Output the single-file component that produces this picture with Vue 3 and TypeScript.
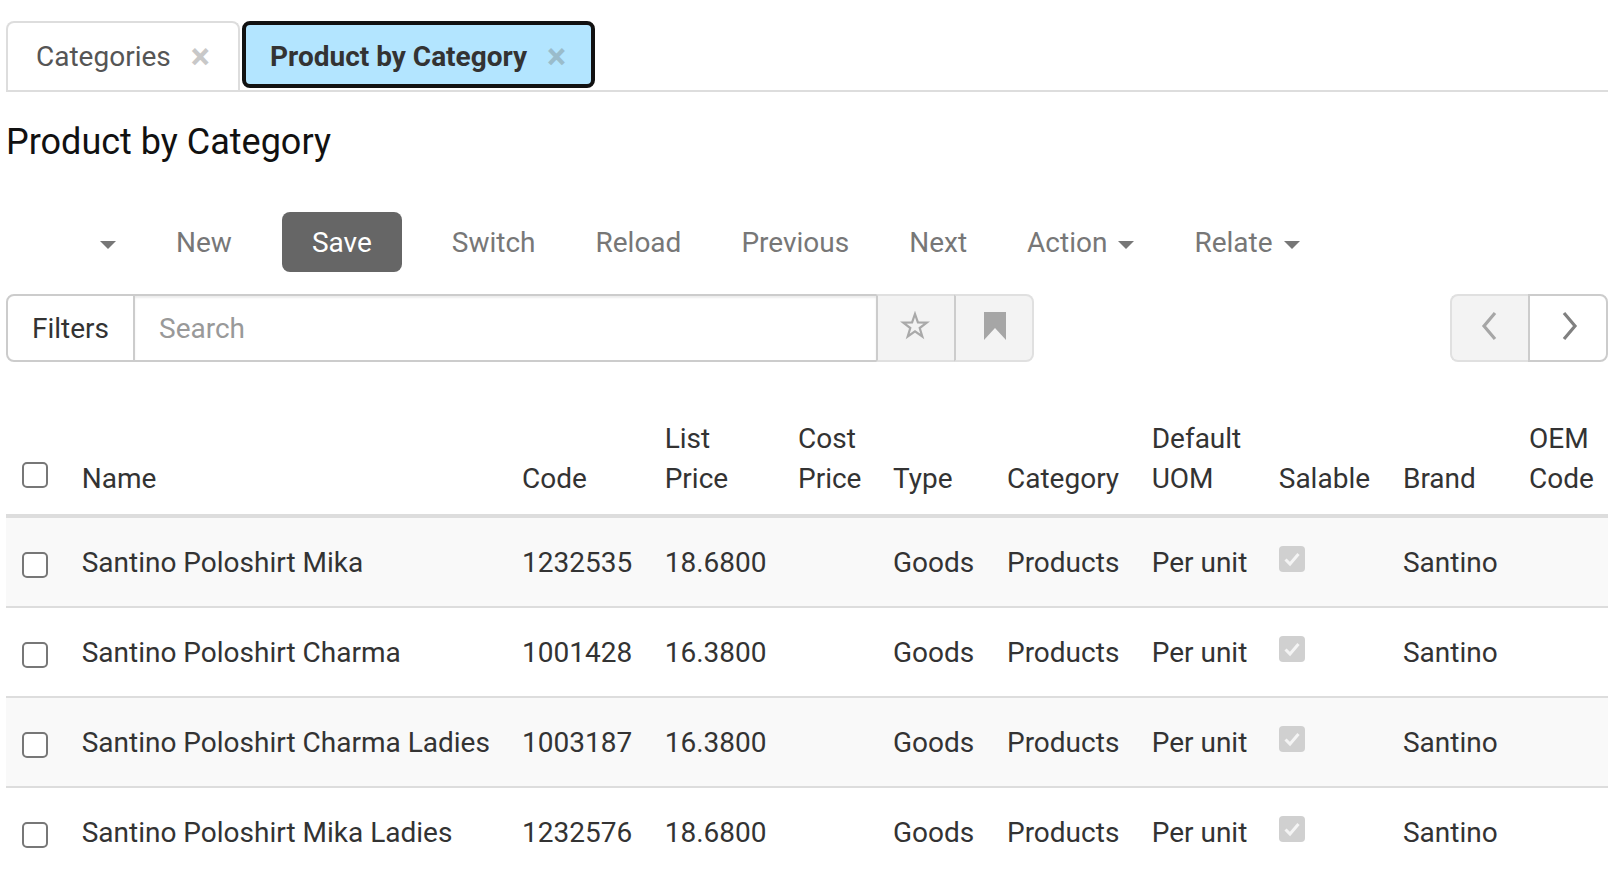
<script setup lang="ts">
interface Row { name: string; code: string; price: string }
const rows: Row[] = [
  { name: 'Santino Poloshirt Mika', code: '1232535', price: '18.6800' },
  { name: 'Santino Poloshirt Charma', code: '1001428', price: '16.3800' },
  { name: 'Santino Poloshirt Charma Ladies', code: '1003187', price: '16.3800' },
  { name: 'Santino Poloshirt Mika Ladies', code: '1232576', price: '18.6800' },
]
const colWidths = [59.7, 440.3, 142.7, 133.3, 95, 114, 144.7, 127.1, 124.2, 126, 94.6]
</script>

<template>
  <div class="page">
    <div class="tabs">
      <div class="tab">Categories <span class="close">×</span></div>
      <div class="tab active">Product by Category <span class="close">×</span></div>
    </div>
    <h1 class="title">Product by Category</h1>
    <div class="toolbar">
      <span class="tbtn caret-only"><i class="caret"></i></span>
      <span class="tbtn">New</span>
      <span class="tbtn save">Save</span>
      <span class="tbtn">Switch</span>
      <span class="tbtn">Reload</span>
      <span class="tbtn">Previous</span>
      <span class="tbtn">Next</span>
      <span class="tbtn">Action<i class="caret"></i></span>
      <span class="tbtn">Relate<i class="caret"></i></span>
    </div>
    <div class="filterbar">
      <div class="group search">
        <div class="filters">Filters</div>
        <div class="input">Search</div>
        <div class="addon">
          <svg class="lift star" width="30" height="30" viewBox="0 0 30 30"><path d="M15 3l2.900 8.400 8.900.2-7.100 5.400 2.600 8.500-7.300-5.100-7.300 5.100 2.600-8.500-7.100-5.400 8.900-.2z" fill="none" stroke="#a9a9a9" stroke-width="2.200"/></svg>
        </div>
        <div class="addon last">
          <svg class="lift" width="24" height="30" viewBox="0 0 24 30"><path d="M1 1h22v28l-11-12-11 12z" fill="#a6a6a6"/></svg>
        </div>
      </div>
      <div class="group nav">
        <div class="addon navbtn">
          <svg class="lift" width="20" height="30" viewBox="0 0 20 30"><path d="M15 2L4 15l11 13" fill="none" stroke="#a6a6a6" stroke-width="3.200"/></svg>
        </div>
        <div class="navbtn next">
          <svg class="lift" width="20" height="30" viewBox="0 0 20 30"><path d="M6 2l11 13L6 28" fill="none" stroke="#808080" stroke-width="3.200"/></svg>
        </div>
      </div>
    </div>
    <table class="grid">
      <colgroup>
        <col v-for="(w, i) in colWidths" :key="i" :style="{ width: w + 'px' }" />
      </colgroup>
      <thead>
        <tr>
          <th><span class="check head"></span></th>
          <th>Name</th>
          <th>Code</th>
          <th>List<br />Price</th>
          <th>Cost<br />Price</th>
          <th>Type</th>
          <th>Category</th>
          <th>Default<br />UOM</th>
          <th>Salable</th>
          <th>Brand</th>
          <th>OEM<br />Code</th>
        </tr>
      </thead>
      <tbody>
        <tr v-for="r in rows" :key="r.code">
          <td><span class="check"></span></td>
          <td>{{ r.name }}</td>
          <td>{{ r.code }}</td>
          <td>{{ r.price }}</td>
          <td></td>
          <td>Goods</td>
          <td>Products</td>
          <td>Per unit</td>
          <td>
            <span class="sale">
              <svg width="18" height="18" viewBox="0 0 18 18"><path d="M2.500 9.500l4.500 4.500 8.500-10" fill="none" stroke="#f4f4f4" stroke-width="3"/></svg>
            </span>
          </td>
          <td>Santino</td>
          <td></td>
        </tr>
      </tbody>
    </table>
  </div>
</template>

<style>
html, body { margin: 0; height: 871px; overflow: hidden; background: #fff; }
</style>

<style scoped>
.page {
  width: 1601.6px;
  padding: 21px 0 0 6px;
  font-family: Roboto, "Liberation Sans", sans-serif;
  font-size: 28px;
  line-height: 40px;
  color: #333;
}
.tabs {
  display: flex;
  height: 69px;
  border-bottom: 2px solid #ddd;
  gap: 2px;
}
.tab {
  width: 234px;
  box-sizing: border-box;
  height: 69px;
  padding: 14px 0 0 28px;
  border: 2px solid #ddd;
  border-bottom: 0;
  border-radius: 8px 8px 0 0;
  color: #555;
  white-space: nowrap;
}
.tab.active {
  position: relative;
  width: 353px;
  height: 67px;
  padding: 12px 0 0 24px;
  background: #b3e5ff;
  border: 4px solid #111;
  border-radius: 8px;
  color: #333;
  font-weight: 700;
}
.tab.active::after {
  content: "";
  position: absolute;
  left: -4px;
  right: -6px;
  bottom: -6px;
  height: 10px;
  z-index: -1;
  background: linear-gradient(to right, #cfeaf7 8px, #fff 8px, #fff calc(100% - 10px), #cfeaf7 calc(100% - 10px), #cfeaf7 calc(100% - 2px), #ececec calc(100% - 2px));
}
.close {
  display: inline-block;
  margin-left: 13px;
  font-size: 36px;
  line-height: 30px;
  font-weight: 700;
  color: #c8c8c8;
  vertical-align: -3px;
}
.active .close { color: #9abccb; margin-left: 13px; }
.title {
  margin: 30px 0 0;
  font-size: 36px;
  line-height: 40px;
  font-weight: 400;
  color: #111;
}
.toolbar {
  display: flex;
  align-items: center;
  height: 60px;
  margin-top: 50px;
  padding-left: 94px;
  gap: 20px;
  color: #777;
}
.tbtn {
  padding: 2px 20px 0;
  line-height: 58px;
  white-space: nowrap;
}
.caret-only { padding: 2px 0 0; width: 36px; box-sizing: border-box; }
.save {
  margin: 0 10px;
  padding: 2px 30px 0;
  background: #666;
  color: #fff;
  border-radius: 8px;
}
.caret {
  display: inline-block;
  margin-left: 11px;
  vertical-align: middle;
  border-top: 8px solid #777;
  border-left: 8px solid transparent;
  border-right: 8px solid transparent;
}
.caret-only .caret { margin-left: 0; }
.filterbar {
  display: flex;
  justify-content: space-between;
  margin-top: 22px;
  height: 68px;
}
.group {
  display: flex;
  box-sizing: border-box;
  height: 68px;
}
.search { width: 1028px; }
.filters {
  width: 129px;
  box-sizing: border-box;
  padding-left: 24px;
  line-height: 66px;
  border: 2px solid #ccc;
  border-radius: 8px 0 0 8px;
}
.input {
  flex: 1;
  padding-left: 24px;
  line-height: 66px;
  color: #999;
  border: 2px solid #ccc;
  border-left: 0;
  border-right: 0;
  box-shadow: inset 0 2px 2px rgba(0, 0, 0, 0.08);
}
.addon {
  width: 78px;
  box-sizing: border-box;
  display: flex;
  align-items: center;
  justify-content: center;
  background: #f3f3f3;
  border: 2px solid #e0e0e0;
  border-left: 2px solid #ccc;
  border-right: 0;
}
.addon.last {
  width: 80px;
  padding-left: 2px;
  border-right: 2px solid #e0e0e0;
  border-radius: 0 8px 8px 0;
}
.lift { margin-bottom: 4px; }
.star { margin-right: 2px; }
.nav { width: 158px; }
.navbtn {
  flex: 1;
  box-sizing: border-box;
  display: flex;
  align-items: center;
  justify-content: center;
}
.nav .addon {
  border: 2px solid #e0e0e0;
  border-right: 0;
  border-radius: 8px 0 0 8px;
}
.next {
  border: 2px solid #ccc;
  border-radius: 0 8px 8px 0;
}
.grid {
  width: 1601.6px;
  margin-top: 57px;
  table-layout: fixed;
  border-collapse: separate;
  border-spacing: 0;
}
th, td {
  padding: 9px 0 7px 16px;
  text-align: left;
  font-weight: 400;
  white-space: nowrap;
  overflow: visible;
}
th {
  vertical-align: bottom;
  padding-top: 0;
  padding-bottom: 15px;
  border-bottom: 4px solid #ddd;
}
td {
  height: 72px;
  vertical-align: middle;
  border-bottom: 2px solid #ddd;
}
tbody tr:nth-child(odd) td { background: #f9f9f9; }
.check {
  display: block;
  width: 26px;
  height: 26px;
  box-sizing: border-box;
  background: #fff;
  border: 2px solid #777;
  border-radius: 5px;
  margin-top: 3px;
}
.check.head { margin: 0 0 11px; }
.sale {
  display: flex;
  align-items: center;
  justify-content: center;
  width: 26px;
  height: 26px;
  margin-top: -8px;
  background: #d0d0d0;
  border-radius: 4px;
}
</style>
